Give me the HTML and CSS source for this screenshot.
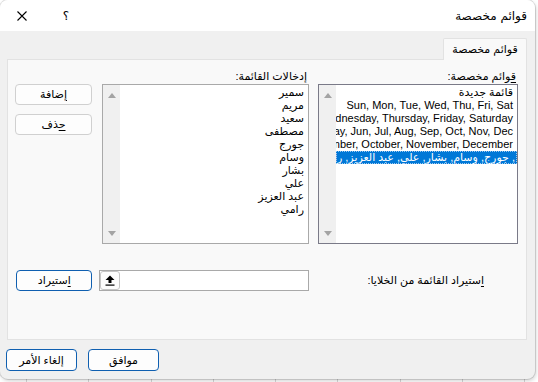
FILE: index.html
```html
<!DOCTYPE html>
<html lang="ar">
<head>
    <meta charset="UTF-8" />
    <title>قوائم مخصصة</title>
    <link rel="stylesheet" href="styles.css">
</head>
<body>
    <div class="dialog" dir="rtl">
        <!-- Title bar -->
        <div class="titlebar">
            <span class="title">قوائم مخصصة</span>
            <span class="help">؟</span>
            <span class="close">
                <svg width="10" height="10" viewBox="0 0 10 10"><path d="M0.5 0.5 L9.5 9.5 M9.5 0.5 L0.5 9.5" stroke="#000" stroke-width="1.1" fill="none"/></svg>
            </span>
        </div>

        <div class="content">
            <div class="tabs"><span class="tab">قوائم مخصصة</span></div>

            <div class="panel">
                <div class="lists">
                    <div class="col">
                        <div class="label"><u>ق</u>وائم مخصصة:</div>
                        <div class="listbox focused">
                            <div class="scrollbar"><span class="arrow up"></span><span class="arrow down"></span></div>
                            <ul class="items">
                                <li>قائمة جديدة</li>
                                <li>Sun, Mon, Tue, Wed, Thu, Fri, Sat</li>
                                <li>Sunday, Monday, Tuesday, Wednesday, Thursday, Friday, Saturday</li>
                                <li>Jan, Feb, Mar, Apr, May, Jun, Jul, Aug, Sep, Oct, Nov, Dec</li>
                                <li>January, February, March, April, May, June, July, August, September, October, November, December</li>
                                <li class="selected">, جورج, وسام, بشار, علي, عبد العزيز, رامي</li>
                            </ul>
                        </div>
                    </div>

                    <div class="col">
                        <div class="label">إدخالات القائمة:</div>
                        <div class="listbox">
                            <div class="scrollbar"><span class="arrow up"></span><span class="arrow down"></span></div>
                            <ul class="items">
                                <li>سمير</li>
                                <li>مريم</li>
                                <li>سعيد</li>
                                <li>مصطفى</li>
                                <li>جورج</li>
                                <li>وسام</li>
                                <li>بشار</li>
                                <li>علي</li>
                                <li>عبد العزيز</li>
                                <li>رامي</li>
                            </ul>
                        </div>
                    </div>

                    <div class="col buttons">
                        <button class="btn"><u>إ</u>ضافة</button>
                        <button class="btn"><u>ح</u>ذف</button>
                    </div>
                </div>

                <div class="import-row">
                    <div class="import-label"><u>ا</u>ستيراد القائمة من الخلايا:</div>
                    <div class="range-input">
                        <span class="range-btn">
                            <svg width="10" height="11" viewBox="0 0 10 11"><path d="M5 0.5 L9.5 5 L6.5 5 L6.5 8 L3.5 8 L3.5 5 L0.5 5 Z" fill="#000"/><rect x="0.5" y="9.5" width="9" height="1.2" fill="#000"/></svg>
                        </span>
                    </div>
                    <button class="btn primary"><u>ا</u>ستيراد</button>
                </div>
            </div>

            <div class="footer">
                <button class="btn primary wide">موافق</button>
                <button class="btn primary wide">إلغاء الأمر</button>
            </div>
        </div>
    </div>
</body>
</html>
```

FILE: styles.css
```css
body {
    margin: 0;
    height: 382px;
    background: #fff repeating-linear-gradient(90deg, transparent 0, transparent 26px, #d6d6d6 26px, #d6d6d6 27px, transparent 27px, transparent 62.3px);
    font-family: "Liberation Sans", "DejaVu Sans", sans-serif;
    font-size: 11px;
    color: #000;
    overflow: hidden;
}

.dialog {
    width: 535px;
    height: 379px;
    background: #f0f0f0;
    border-radius: 8px;
    box-shadow: 0 0 0 1px rgba(0,0,0,0.12), 1px 2px 4px rgba(0,0,0,0.18);
    overflow: hidden;
    display: flex;
    flex-direction: column;
}

.titlebar {
    height: 31px;
    background: #fff;
    display: flex;
    align-items: center;
}

.title {
    font-family: "DejaVu Sans", sans-serif;
    font-size: 12px;
    padding-right: 8px;
    margin-top: 1px;
}

.help,
.close {
    width: 44px;
    height: 31px;
    display: flex;
    align-items: center;
    justify-content: center;
}

.help {
    margin-right: auto;
    font-family: "DejaVu Sans", sans-serif;
    font-size: 12px;
}

.content {
    padding: 7px 8px 0 7px;
}

.tabs {
    display: flex;
    height: 21px;
}

.tab {
    width: 82px;
    height: 21px;
    line-height: 21px;
    text-align: center;
    background: #f9f9f9;
    border: 1px solid #e2e2e2;
    border-bottom: none;
    border-radius: 2px 2px 0 0;
    position: relative;
    z-index: 1;
}

.panel {
    background: #f9f9f9;
    border: 1px solid #e2e2e2;
    padding: 8px 8px 0 8px;
    box-sizing: border-box;
    height: 281px;
}

.lists {
    display: grid;
    grid-template-columns: 200px 208px 77px;
    column-gap: 9px;
}

.lists .col:nth-child(2) {
    margin-left: 1px;
}

.label {
    height: 16px;
    line-height: 16px;
    padding-right: 2px;
    white-space: nowrap;
}

u {
    text-underline-offset: 2px;
}

.listbox {
    height: 160px;
    box-sizing: border-box;
    border: 1px solid #a9a9a9;
    background: #fff;
    display: flex;
    flex-direction: row-reverse;
    justify-content: flex-end;
    overflow: hidden;
}

.listbox.focused {
    border-color: #7a7a88;
}

.scrollbar {
    width: 17px;
    flex: none;
    background: #f0f0f0;
    display: flex;
    flex-direction: column;
    justify-content: space-between;
    align-items: center;
    padding: 8px 0 7px;
    box-sizing: border-box;
}

.arrow {
    width: 0;
    height: 0;
    border-left: 4px solid transparent;
    border-right: 4px solid transparent;
}

.arrow.up {
    border-bottom: 5px solid #a3a3a3;
}

.arrow.down {
    border-top: 5px solid #a3a3a3;
}

.items {
    list-style: none;
    margin: 0;
    padding: 1px 0 0 0;
    flex: 1;
    min-width: 0;
    overflow: hidden;
}

.items li {
    height: 13px;
    line-height: 13px;
    padding-right: 4px;
    white-space: nowrap;
    overflow: hidden;
}

.items li.selected {
    background: #0078d7;
    color: #fff;
    padding-right: 2px;
    outline: 1px dotted #9ec9ef;
    outline-offset: -1px;
}

.buttons {
    padding-top: 16px;
    display: flex;
    flex-direction: column;
    gap: 9px;
}

.btn {
    font-family: "Liberation Sans", "DejaVu Sans", sans-serif;
    font-size: 11px;
    color: #000;
    width: 77px;
    height: 21px;
    padding: 0;
    background: #fdfdfd;
    border: 1px solid #d0d0d0;
    border-radius: 4px;
}

.btn.primary {
    border-color: #0f5fb0;
}

.btn.wide {
    width: 71px;
    height: 22px;
}

.import-row {
    display: flex;
    align-items: center;
    margin-top: 26px;
    height: 21px;
}

.import-label {
    width: 209px;
    flex: none;
    box-sizing: border-box;
    padding-right: 34px;
    white-space: nowrap;
}

.range-input {
    width: 211px;
    height: 21px;
    box-sizing: border-box;
    border: 1px solid #a9a9a9;
    background: #fff;
    display: flex;
    justify-content: flex-end;
    margin-left: 7px;
}

.range-btn {
    width: 20px;
    height: 19px;
    box-sizing: border-box;
    border: 1px solid #c6c6c6;
    border-radius: 3px;
    background: #fdfdfd;
    display: flex;
    align-items: center;
    justify-content: center;
}

.footer {
    display: flex;
    justify-content: flex-end;
    gap: 11px;
    padding-top: 9px;
    margin-left: -1px;
}
```
